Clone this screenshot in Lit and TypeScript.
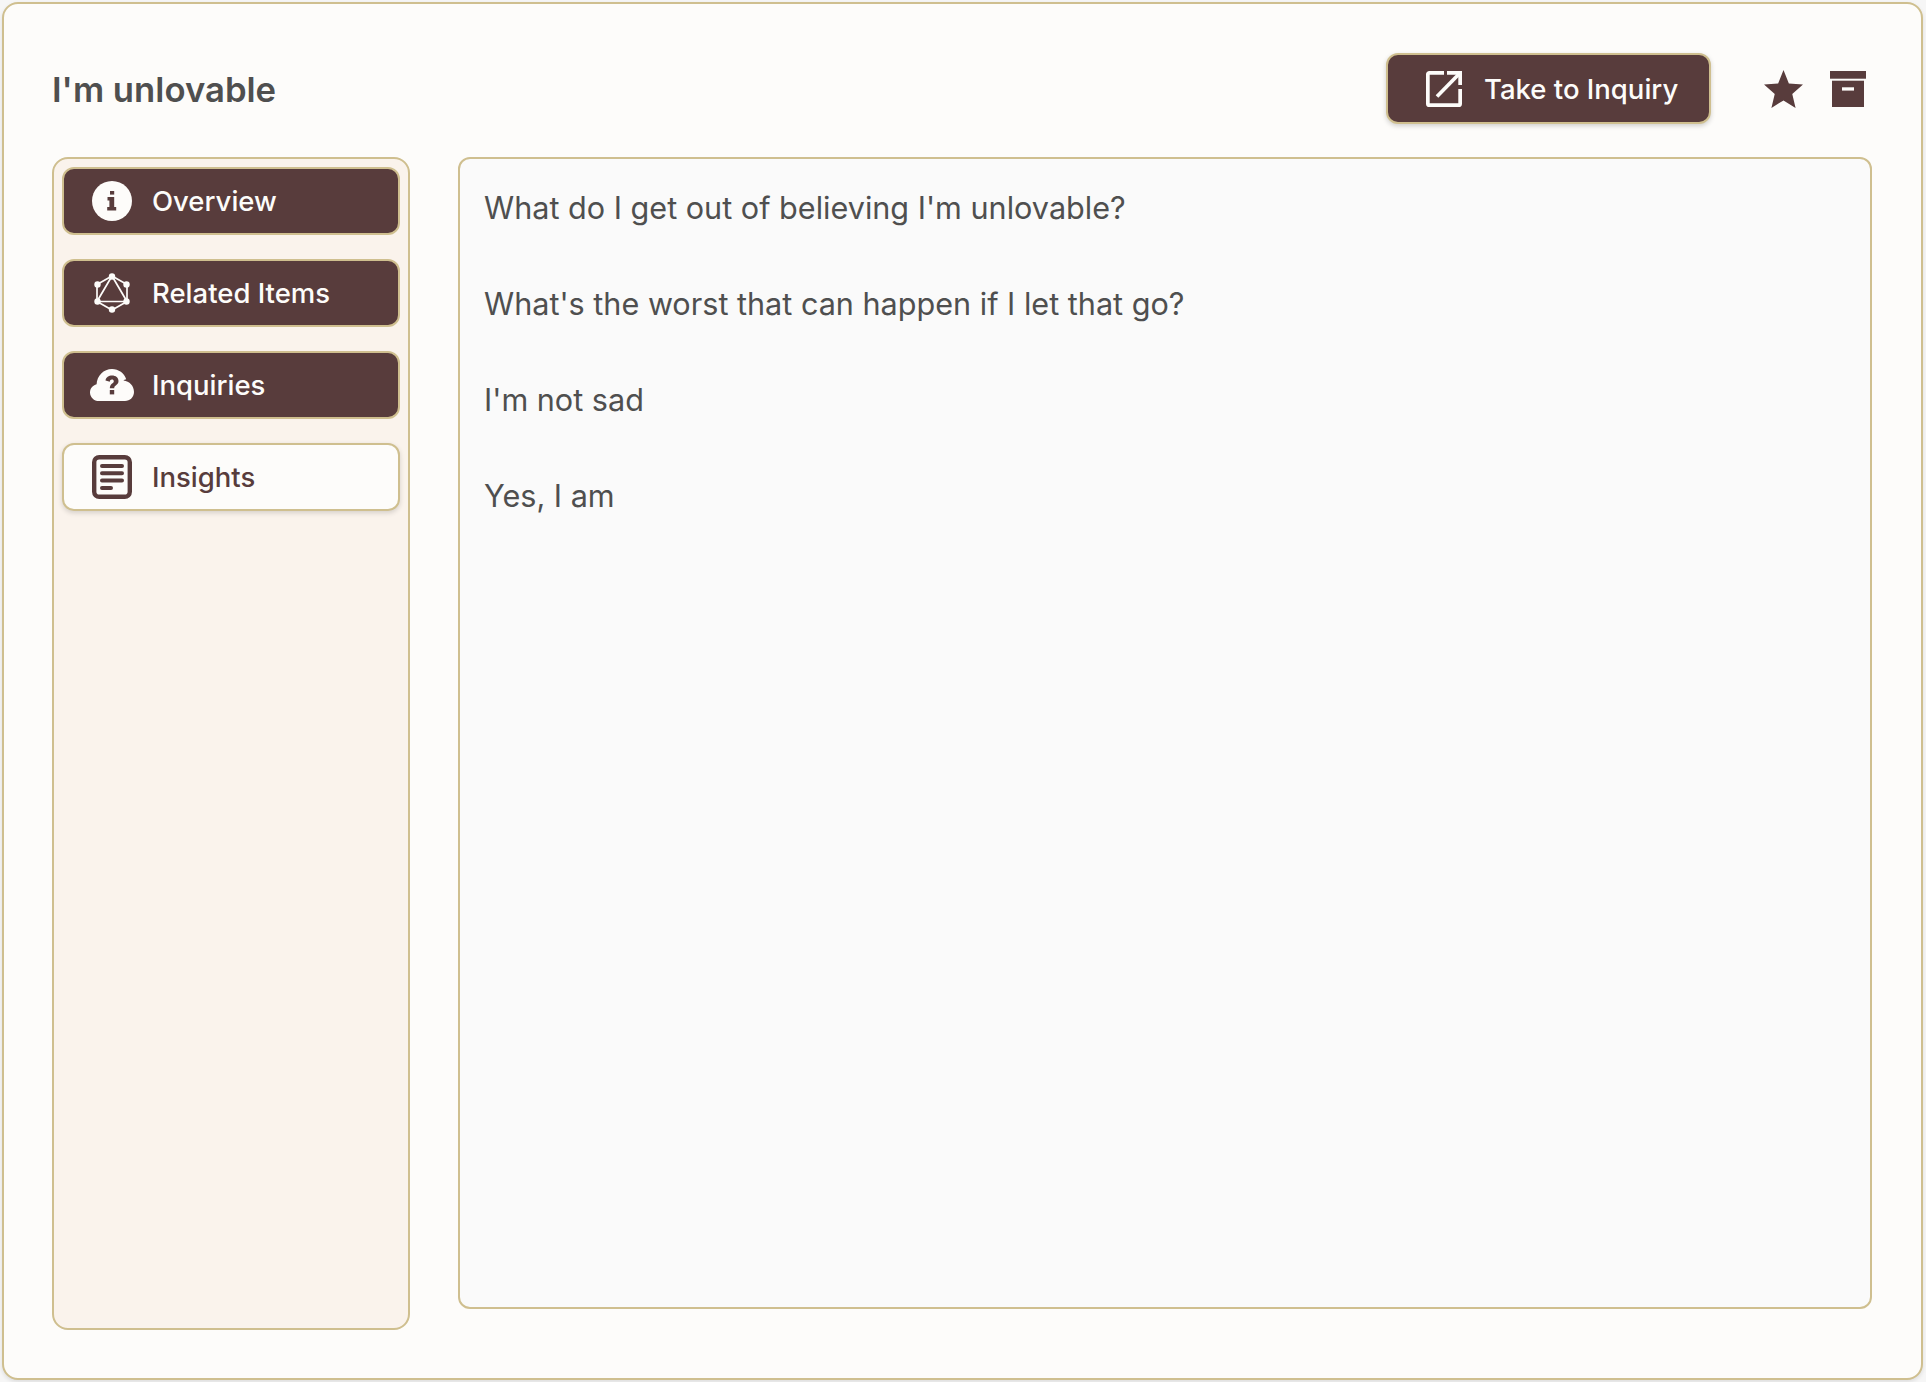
import { LitElement, html, css, svg } from "lit";
import { customElement } from "lit/decorators.js";

const infoIcon = html`<svg class="ic" viewBox="0 0 40 40" width="40" height="40"><circle cx="20" cy="20" r="20" fill="#fdfcfa"/><rect x="18" y="10" width="4.200" height="3.600" fill="#583c3c"/><path d="M15.500 16h6.700v10h2v3.500h-9V26h2.200v-6.500h-1.900z" fill="#583c3c"/></svg>`;
const graphIcon = html`<svg class="ic" viewBox="0 0 36 40" width="36" height="40"><g fill="none" stroke="#fdfcfa" stroke-width="1.7"><path d="M18 3 33 11.5V28.5L18 37 3 28.5V11.5Z"/><path d="M18 3 33 28.5H3Z"/></g><g fill="#fdfcfa"><circle cx="18" cy="3.5" r="3.2"/><circle cx="32.5" cy="11.5" r="3.2"/><circle cx="32.5" cy="28.5" r="3.2"/><circle cx="18" cy="36.5" r="3.2"/><circle cx="3.5" cy="28.5" r="3.2"/><circle cx="3.5" cy="11.5" r="3.2"/></g></svg>`;
const cloudIcon = html`<svg class="ic" viewBox="0 0 44 32" width="44" height="32"><path d="M9 32C4 32 0 28.2 0 23.4 0 19.4 2.8 16.2 6.600 15.200 7 6.800 13.600 0 22 0c6.600 0 12.200 4.200 14.200 10.300C35 10.800 34 11 33.500 11.500 39.500 12 44 17 44 23c0 5-4 9-9 9Z" fill="#fdfcfa"/><path d="M15.500 11.500C16 8 18.800 6.500 22 6.500c3.800 0 6.500 2.200 6.500 5.500 0 4.300-4.300 4-4.300 7.300h-4.400c0-4.800 4-4.600 4-7 0-1-.8-1.700-1.900-1.700-1.200 0-2 .8-2.100 2.100Z" fill="#583c3c"/><rect x="19.800" y="21" width="4.400" height="4.400" fill="#583c3c"/></svg>`;
const docIcon = html`<svg class="ic" viewBox="0 0 40 44" width="40" height="44"><rect x="2.200" y="2.200" width="35.600" height="39.600" rx="5" fill="none" stroke="#583c3c" stroke-width="4.400"/><g stroke="#583c3c" stroke-width="4" stroke-linecap="round"><path d="M10 11h20M10 18.300h20M10 25.600h20M10 33h9"/></g></svg>`;
const extIcon = html`<svg class="ic" viewBox="0 0 36 36" width="36" height="36"><path d="M18 1.850H3.350A1.500 1.500 0 0 0 1.850 3.350V32.650A1.500 1.500 0 0 0 3.350 34.150H32.650A1.500 1.500 0 0 0 34.150 32.650V18" fill="none" stroke="#fdfcfa" stroke-width="3.700"/><path d="M11 25.500 33 3" fill="none" stroke="#fdfcfa" stroke-width="3.700"/><path d="M21 0H36V14H32.300V3.700H21Z" fill="#fdfcfa"/></svg>`;
const starIcon = svg`<svg class="ic" viewBox="0 0 40 39" width="39" height="38"><path d="M20 0 25.500 13.800 40 14.900 29 24.600 32.400 39 20 31.200 7.600 39 11 24.600 0 14.900 14.500 13.800Z" fill="#583c3c"/></svg>`;
const boxIcon = svg`<svg class="ic" viewBox="0 0 36 36" width="36" height="36"><rect x="0" y="0" width="36" height="7.700" fill="#583c3c"/><path d="M2 9.700H34V36H2Z" fill="#583c3c"/><rect x="12" y="16.300" width="12" height="3.300" fill="#fdfcfa"/></svg>`;

const items = [
  { label: "Overview", icon: infoIcon, active: true },
  { label: "Related Items", icon: graphIcon, active: true },
  { label: "Inquiries", icon: cloudIcon, active: true },
  { label: "Insights", icon: docIcon, active: false },
];

const lines = [
  "What do I get out of believing I'm unlovable?",
  "What's the worst that can happen if I let that go?",
  "I'm not sad",
  "Yes, I am",
];

@customElement("app-root")
export class AppRoot extends LitElement {
  static styles = css`
    :host {
      display: block;
      padding: 2px 3px 2px 2px;
      font-family: Inter, "Liberation Sans", sans-serif;
      color: #4f4f4f;
      background: #f6f6f6;
    }
    * { box-sizing: border-box; }
    .ic { display: block; flex: none; }
    .card {
      height: 1378px;
      display: flex;
      flex-direction: column;
      padding: 49px 48px 48px;
      background: #fdfcfa;
      border: 2px solid #cfbf8f;
      border-radius: 16px;
      box-shadow: 0 2px 4px rgba(0,0,0,.1);
    }
    .head {
      display: flex;
      align-items: center;
      height: 71px;
      margin-bottom: 33px;
    }
    h1 {
      margin: 0;
      flex: 1;
      font-size: 34.7px;
      line-height: 44px;
      font-weight: 600;
      color: #4f4f4f;
    }
    .take {
      display: flex;
      align-items: center;
      gap: 22px;
      width: 325px;
      height: 71px;
      padding-left: 38px;
      background: #583c3c;
      color: #fdfcfa;
      font-size: 27.5px;
      font-weight: 500;
      border: 2px solid #cfbf8f;
      border-radius: 12px;
      box-shadow: 0 2px 5px rgba(0,0,0,.18);
    }
    .acts {
      display: flex;
      align-items: center;
      gap: 27px;
      margin-left: 53px;
      margin-right: 7px;
    }
    .main {
      flex: 1;
      display: flex;
      gap: 48px;
      align-items: stretch;
      min-height: 0;
    }
    .side {
      width: 358px;
      display: flex;
      flex-direction: column;
      gap: 24px;
      padding: 8px;
      background: #faf3ec;
      border: 2px solid #cfbf8f;
      border-radius: 16px;
    }
    .nav {
      display: flex;
      align-items: center;
      height: 68px;
      padding-left: 26px;
      font-size: 27.5px;
      font-weight: 500;
      background: #583c3c;
      color: #fdfcfa;
      border: 2px solid #cfbf8f;
      border-radius: 12px;
    }
    .nav.off {
      background: #fdfcfa;
      color: #583c3c;
      box-shadow: 0 2px 5px rgba(0,0,0,.15);
    }
    .slot { width: 44px; margin-right: 18px; display: flex; justify-content: center; flex: none; }
    .body {
      flex: 1;
      margin-right: 1px;
      margin-bottom: 21px;
      padding: 25px 24px;
      background: #fafafa;
      border: 2px solid #cfbf8f;
      border-radius: 12px;
      font-size: 30.6px;
      line-height: 48px;
      color: #4f4f4f;
    }
    .body p { margin: 0 0 48px; }
  `;

  render() {
    return html`
      <div class="card">
        <div class="head">
          <h1>I'm unlovable</h1>
          <div class="take">${extIcon}<span>Take to Inquiry</span></div>
          <div class="acts">${starIcon}${boxIcon}</div>
        </div>
        <div class="main">
          <nav class="side">
            ${items.map(
              (i) => html`<div class="nav ${i.active ? "" : "off"}"><span class="slot">${i.icon}</span><span>${i.label}</span></div>`
            )}
          </nav>
          <div class="body">${lines.map((l) => html`<p>${l}</p>`)}</div>
        </div>
      </div>
    `;
  }
}
